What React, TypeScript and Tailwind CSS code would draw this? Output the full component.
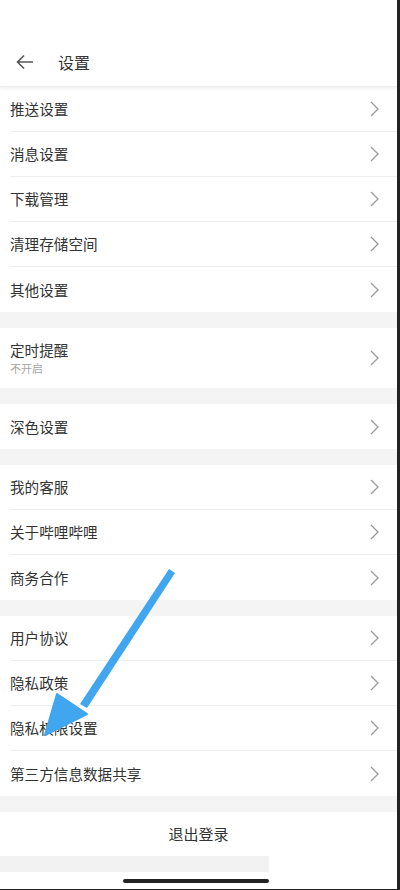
type Row = { label: string; sub?: string };

const groups: Row[][] = [
  [
    { label: "推送设置" },
    { label: "消息设置" },
    { label: "下载管理" },
    { label: "清理存储空间" },
    { label: "其他设置" },
  ],
  [{ label: "定时提醒", sub: "不开启" }],
  [{ label: "深色设置" }],
  [{ label: "我的客服" }, { label: "关于哔哩哔哩" }, { label: "商务合作" }],
  [
    { label: "用户协议" },
    { label: "隐私政策" },
    { label: "隐私权限设置" },
    { label: "第三方信息数据共享" },
  ],
];

function Chevron() {
  return (
    <svg width="12" height="18" viewBox="0 0 12 18" className="shrink-0">
      <polyline points="2,2 9,9 2,16" fill="none" stroke="#9a9a9a" strokeWidth="1.3" />
    </svg>
  );
}

function SettingRow({ row, last }: { row: Row; last: boolean }) {
  return (
    <div className={`flex items-center pl-[10px] ${row.sub ? "h-[60px]" : "h-[45px]"}`}>
      <div className={`flex-1 h-full flex items-center pr-[16px] ${last ? "" : "border-b border-[#efefef]"}`}>
        <div className="flex-1 flex flex-col">
          <span className="text-[14.6px] leading-5 text-[#333]">{row.label}</span>
          {row.sub && <span className="text-[11px] leading-4 text-[#a5a5a5]">{row.sub}</span>}
        </div>
        <Chevron />
      </div>
    </div>
  );
}

export default function App() {
  return (
    <div
      className="relative w-[400px] h-[890px] overflow-hidden bg-white border-r-[3px] border-b border-[#222] flex flex-col"
      style={{ fontFamily: '"Noto Sans CJK SC", "Noto Sans", sans-serif' }}
    >
      <div className="h-[37px]" />
      <div className="h-[50px] flex items-center pl-[16px] gap-[24px] shadow-[0_2px_3px_rgba(0,0,0,0.06)] relative z-10 border-b border-[#eee]">
        <svg width="18" height="16" viewBox="0 0 18 16">
          <path d="M17 8 H2 M8 1.5 L1.5 8 L8 14.5" fill="none" stroke="#555" strokeWidth="1.6" />
        </svg>
        <span className="text-[16px] text-[#333]">设置</span>
      </div>
      <div className="flex flex-col bg-[#f4f4f4] gap-[16px]">
        {groups.map((g, gi) => (
          <div key={gi} className="bg-white flex flex-col">
            {g.map((r, ri) => (
              <SettingRow key={r.label} row={r} last={ri === g.length - 1} />
            ))}
          </div>
        ))}
        <div className="bg-white h-[44px] flex items-center justify-center">
          <span className="text-[15px] text-[#333]">退出登录</span>
        </div>
      </div>
      <div className="h-[16px] w-[269px] bg-[#f2f2f2]" />
      <div className="flex-1 relative">
        <div className="absolute left-[123px] top-[7px] w-[146px] h-[4px] rounded-full bg-[#222]" />
      </div>
      <svg className="absolute left-0 top-0" width="400" height="890" viewBox="0 0 400 890">
        <path d="M169 569 L175 573 L87 708 L80 704 Z" fill="#3fa6ef" />
        <path d="M57 694 L87 714 L45 735 Z" fill="#3fa6ef" strokeLinejoin="round" stroke="#3fa6ef" strokeWidth="2" />
      </svg>
    </div>
  );
}
